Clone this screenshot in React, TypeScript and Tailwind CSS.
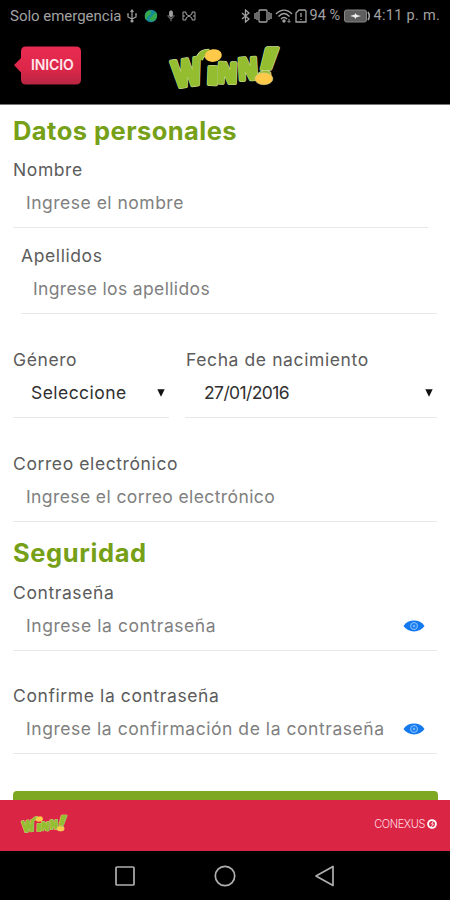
import type { ReactNode } from "react";

const letter = {
  fill: "#94bd2f",
  stroke: "#94bd2f",
  strokeWidth: 9,
  strokeLinejoin: "round" as const,
};

function LogoLetters({ outline = false }: { outline?: boolean }) {
  const paint = outline ? { ...letter, fill: "#dbe6b0", stroke: "#dbe6b0", strokeWidth: 12 } : letter;
  return (
    <g {...paint} fontFamily="'Open Sans', sans-serif" fontWeight="800" fontSize="100">
      <text transform="translate(40 147) rotate(-9)" fontSize="112" textLength="90" lengthAdjust="spacingAndGlyphs">W</text>
      <path d="M116 62 C118 46 128 39 146 39" fill="none" strokeWidth={outline ? 22 : 18} />
      <text transform="translate(138 135) rotate(2)" fontSize="94" textLength="34" lengthAdjust="spacingAndGlyphs">ı</text>
      <text transform="translate(169 130) rotate(2)" fontSize="84" textLength="60" lengthAdjust="spacingAndGlyphs">N</text>
      <text transform="translate(234 123) rotate(-3)" fontSize="90" textLength="60" lengthAdjust="spacingAndGlyphs">N</text>
      <text transform="translate(285 124) skewX(-17)" fontSize="134" textLength="44" lengthAdjust="spacingAndGlyphs">!</text>
    </g>
  );
}

function Logo({ className }: { className: string }) {
  return (
    <svg viewBox="26 14 338 142" className={`overflow-visible ${className}`} aria-label="Winn!">
      <LogoLetters outline />
      <LogoLetters />
      <ellipse cx="158" cy="49" rx="26" ry="19" fill="#ffc94a" transform="rotate(-8 158 49)" />
      <ellipse cx="311" cy="119" rx="27" ry="18" fill="#ffc94a" stroke="#d5ca8b" strokeWidth="2" />
    </svg>
  );
}

function Eye() {
  return (
    <svg viewBox="0 0 22 14" className="h-3.5 w-[22px]">
      <path d="M.5 7C5-.2 17-.2 21.5 7C17 14.2 5 14.2.5 7Z" fill="#1479ee" />
      <circle cx="11" cy="7" r="3.5" fill="#2184f5" stroke="#8dc1fb" strokeWidth="1" />
      <circle cx="11" cy="7" r="1" fill="#8dc1fb" />
    </svg>
  );
}

function Field({
  label,
  labelClass = "",
  value,
  valueClass,
  className = "",
  end,
}: {
  label: string;
  labelClass?: string;
  value: string;
  valueClass: string;
  className?: string;
  end?: ReactNode;
}) {
  return (
    <div className={className}>
      <div className={`h-6 whitespace-nowrap text-[17.5px] leading-[25px] tracking-[0.6px] text-[#5c5c5c] ${labelClass}`}>{label}</div>
      <div className="flex h-[47px] items-center justify-between border-b border-[#e8e8e8] pb-[3px]">
        <span className={`whitespace-nowrap text-[17.5px] leading-6 ${valueClass}`}>{value}</span>
        {end}
      </div>
    </div>
  );
}

function Caret() {
  return (
    <svg viewBox="0 0 8 8" className="mr-1 h-2 w-2">
      <path d="M.3.3h7.4L4 7.8Z" fill="#111" />
    </svg>
  );
}

function StatusBar() {
  return (
    <div className="flex h-8 items-center justify-between pl-2.5 pr-2.5 font-[Roboto,sans-serif] text-[14.5px] leading-8 text-[#a2a2a2]">
      <div className="flex items-center">
        <span className="w-[116px] whitespace-nowrap text-[15px] tracking-[-0.02px]">Solo emergencia</span>
        <svg viewBox="0 0 12 14" className="h-3.5 w-3" fill="none" stroke="currentColor" strokeWidth="1.2">
          <path d="M6 2v10M2 5v3l4 2 4-2V5M4.5 3 6 1l1.5 2" />
          <circle cx="6" cy="12" r="1" fill="currentColor" />
          <path d="M1 5h2M9 5h2" />
        </svg>
        <svg viewBox="0 0 14 14" className="ml-[6px] h-3.5 w-3.5">
          <circle cx="7" cy="7" r="6.2" fill="#168c9b" />
          <path d="M2 4c3-4 6-2 5 1L4 7 2 11C0 8 1 6 2 4Zm6 3 4-4c2 4 1 7-3 9l-4-1Z" fill="#35a94a" />
        </svg>
        <svg viewBox="0 0 10 14" className="ml-2 h-3 w-2.5" fill="none" stroke="currentColor">
          <rect x="3.2" y="1" width="3.6" height="7" rx="1.8" fill="currentColor" />
          <path d="M1.5 6c0 5 7 5 7 0M5 10v3" />
        </svg>
        <svg viewBox="0 0 14 12" className="ml-[6px] h-3 w-3.5" fill="none" stroke="currentColor">
          <path d="M1 2h3v2l3 2 3-2V2h3v8h-3V8L7 6 4 8v2H1ZM1 6h2M11 6h2" />
        </svg>
      </div>
      <div className="flex items-center">
        <svg viewBox="0 0 10 14" className="h-3.5 w-2.5" fill="none" stroke="currentColor" strokeWidth="1.3">
          <path d="m1 4 7 6-3.5 3V1L8 4l-7 6" />
        </svg>
        <svg viewBox="0 0 18 14" className="ml-[3px] h-3.5 w-[18px]" fill="none" stroke="currentColor" strokeWidth="1.3">
          <rect x="5" y="1" width="8" height="12" rx="1" />
          <path d="M3 3v8M15 3v8M1 4v6M17 4v6" />
        </svg>
        <svg viewBox="0 0 18 14" className="ml-[3px] h-3.5 w-[18px]" fill="none" stroke="currentColor" strokeWidth="1.4">
          <path d="M1 5c5-5 11-5 16 0M3.5 7.5c4-4 7-4 11 0M6 10c2-2 4-2 6 0" />
          <circle cx="9" cy="12" r="1" fill="currentColor" />
          <path d="M14 10v3M12.5 12 14 13.5l1.5-1.5" strokeWidth="1" />
        </svg>
        <svg viewBox="0 0 12 14" className="ml-[2px] h-3.5 w-3" fill="none" stroke="currentColor" strokeWidth="1.3">
          <path d="M4 1h6l1 1v11H1V4ZM6 4v4M6 10v1" />
        </svg>
        <span className="ml-[3px] w-[34px] whitespace-nowrap text-[14.5px]">94 %</span>
        <svg viewBox="0 0 26 14" className="h-3.5 w-[26px]">
          <rect x=".5" y="1" width="22" height="12" rx="2" fill="#5e5e5e" stroke="#858585" />
          <path d="M24 3q2.500 4 0 8" fill="none" stroke="#aaa" strokeWidth="1.5" />
          <path d="m6 7 5-1.500V4l2 2 4 1-5 1.500V10l-2-2Z" fill="#eee" />
        </svg>
        <span className="ml-1 whitespace-nowrap tracking-[0.28px]">4:11 p. m.</span>
      </div>
    </div>
  );
}

export default function App() {
  return (
    <div className="flex h-[900px] w-[450px] flex-col overflow-hidden bg-white font-[Inter,sans-serif]">
      <header className="h-[105px] shrink-0 border-b border-[#777] bg-black">
        <StatusBar />
        <div className="flex items-start pl-3.5 pt-3">
          <div className="relative mt-0.5 h-[39px] w-[68px]">
            <svg viewBox="0 0 68 39" className="absolute inset-0 h-full w-full">
              <defs>
                <linearGradient id="home" x1="0" y1="0" x2="0" y2="1">
                  <stop offset="0" stopColor="#e92b53" />
                  <stop offset=".6" stopColor="#dc2749" />
                  <stop offset="1" stopColor="#b72642" />
                </linearGradient>
              </defs>
              <path d="M12 .5h50q5 0 5 5v28q0 5-5 5H12q-5 0-5-5v-7L0 19l7-7V5.500q0-5 5-5Z" fill="url(#home)" />
            </svg>
            <span className="relative block pl-[17px] text-[14px] font-semibold leading-[37px] tracking-[-0.1px] text-[#ffe7ec]">INICIO</span>
          </div>
          <Logo className="ml-[87px] h-[47px] w-[113px]" />
        </div>
      </header>

      <main className="flex min-h-0 flex-1 flex-col overflow-hidden px-[13px]">
        <h1 className="mt-[10px] h-8 whitespace-nowrap text-[25.5px] font-bold leading-8 tracking-[0.45px] text-[#76a017]">Datos personales</h1>
        <Field className="mt-[10px] w-[415px]" label="Nombre" value="Ingrese el nombre" valueClass="pl-[13px] tracking-[0.5px] text-[#808080]" />
        <Field className="ml-2 mt-[15px] w-[416px]" label="Apellidos" value="Ingrese los apellidos" valueClass="pl-3 tracking-[0.36px] text-[#808080]" />
        <div className="mt-[33px] flex gap-4">
          <Field className="w-[156px]" label="Género" value="Seleccione" valueClass="pl-[18px] tracking-[0.45px] text-[#303030]" end={<Caret />} />
          <Field className="w-[252px]" label="Fecha de nacimiento" labelClass="pl-px" value="27/01/2016" valueClass="pl-[19px] tracking-[-0.6px] text-[#303030]" end={<Caret />} />
        </div>
        <Field className="mt-[33px]" label="Correo electrónico" value="Ingrese el correo electrónico" valueClass="pl-[13px] tracking-[0.4px] text-[#808080]" />
        <h2 className="mt-[15px] h-8 whitespace-nowrap text-[25.5px] font-bold leading-8 tracking-[0.6px] text-[#76a017]">Seguridad</h2>
        <Field className="mt-[11px]" label="Contraseña" value="Ingrese la contraseña" valueClass="pl-[13px] tracking-[0.57px] text-[#808080]" end={<span className="mr-3"><Eye /></span>} />
        <Field className="mt-[32px]" label="Confirme la contraseña" value="Ingrese la confirmación de la contraseña" valueClass="pl-[13px] tracking-[0.55px] text-[#808080]" end={<span className="mr-3"><Eye /></span>} />
        <div className="mr-[-1px] mt-[37px] h-10 shrink-0 rounded bg-[#7ea722]" />
      </main>

      <footer className="flex h-[51px] shrink-0 items-center justify-between bg-[#db2544] pb-[3px] pl-[21px] pr-[13px]">
        <Logo className="h-5 w-[47px]" />
        <div className="flex items-center gap-0.5 text-[#ffdbe1]">
          <span className="text-[11px] font-light leading-4 tracking-[-0.4px]">CONEXUS</span>
          <svg viewBox="0 0 10 10" className="h-2.5 w-2.5">
            <circle cx="5" cy="5" r="3.9" fill="none" stroke="#fff" strokeWidth="1.900" />
            <path d="m6.500 2-2 3h2L4 8" fill="none" stroke="#fff" strokeWidth=".8" />
          </svg>
        </div>
      </footer>

      <nav className="flex h-[49px] shrink-0 items-center justify-center gap-[78px] bg-black">
        <svg viewBox="0 0 22 22" className="h-[22px] w-[22px]" fill="none" stroke="#b0b0b0" strokeWidth="1.700">
          <rect x="2" y="2" width="18" height="18" rx="1" />
        </svg>
        <svg viewBox="0 0 22 22" className="h-[22px] w-[22px]" fill="none" stroke="#b0b0b0" strokeWidth="1.700">
          <circle cx="11" cy="11" r="9.700" />
        </svg>
        <svg viewBox="0 0 22 22" className="h-[22px] w-[22px]" fill="none" stroke="#b0b0b0" strokeWidth="1.700" strokeLinejoin="round">
          <path d="M19 1.500v19L2 11Z" />
        </svg>
      </nav>
    </div>
  );
}
